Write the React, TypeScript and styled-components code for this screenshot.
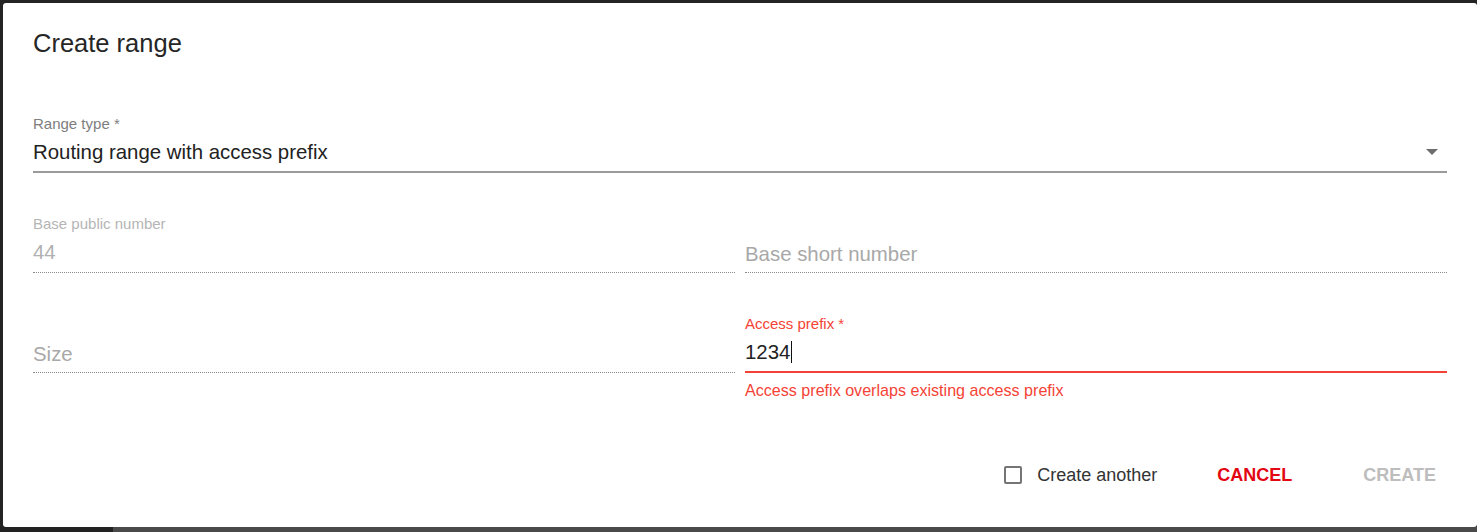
import styled, { createGlobalStyle } from "styled-components";

const GlobalStyle = createGlobalStyle`
  html, body {
    margin: 0;
    padding: 0;
  }
  body {
    font-family: "Liberation Sans", Arial, sans-serif;
    background: #232323;
  }
`;

const Backdrop = styled.div`
  height: 532px;
  padding: 3px 0 0 3px;
  box-sizing: border-box;
  background: linear-gradient(to right, #222222 113px, #4a4a4a 113px) left bottom / 100% 5px no-repeat,
    #242424;
  overflow: hidden;
`;

const Dialog = styled.div`
  width: 1474px;
  height: 524px;
  box-sizing: border-box;
  background: #ffffff;
  border-radius: 3px;
  padding: 24px 30px 0 30px;
  display: flex;
  flex-direction: column;
`;

const Title = styled.h3`
  margin: 0;
  font-size: 25.5px;
  line-height: 32px;
  font-weight: 400;
  color: #262626;
`;

const Form = styled.div`
  margin-top: 56px;
  display: grid;
  grid-template-columns: 1fr 1fr;
  column-gap: 10px;
  row-gap: 42px;
`;

const FullRow = styled.div`
  grid-column: 1 / span 2;
`;

const Field = styled.div`
  display: flex;
  flex-direction: column;
`;

const Label = styled.div<{ $tone: "normal" | "disabled" | "error" }>`
  height: 18px;
  font-size: 15px;
  line-height: 18px;
  color: ${(p) =>
    p.$tone === "error" ? "#f44336" : p.$tone === "disabled" ? "#b5b5b5" : "#7e7e7e"};
  white-space: nowrap;
`;

const InputRow = styled.div`
  margin-top: 7px;
  height: 24px;
  display: flex;
  align-items: center;
`;

const Value = styled.span<{ $tone: "normal" | "disabled" | "placeholder" }>`
  flex: 1;
  font-size: 20.4px;
  line-height: 24px;
  color: ${(p) =>
    p.$tone === "disabled" ? "#b0b0b0" : p.$tone === "placeholder" ? "#a8a8a8" : "#222222"};
  white-space: nowrap;
  ${(p) => (p.$tone === "placeholder" ? "transform: translateY(2px);" : "")}
`;

const Caret = styled.span`
  display: inline-block;
  width: 1px;
  height: 22px;
  margin-left: 1px;
  background: #111111;
  vertical-align: -4px;
`;

const Arrow = styled.span`
  width: 0;
  height: 0;
  margin-right: 9px;
  border-left: 6px solid transparent;
  border-right: 6px solid transparent;
  border-top: 6px solid #6e6e6e;
`;

const Underline = styled.div<{ $kind: "solid" | "dotted" | "error" }>`
  margin-top: 7px;
  height: 2px;
  box-sizing: border-box;
  ${(p) =>
    p.$kind === "dotted"
      ? "border-bottom: 1px dotted #8a8a8a;"
      : `background: ${p.$kind === "error" ? "#f44336" : "#9a9a9a"};`}
`;

const Helper = styled.div`
  margin-top: 8px;
  font-size: 16.1px;
  line-height: 18px;
  color: #f44336;
  white-space: nowrap;
`;

const Footer = styled.div`
  margin-top: auto;
  margin-bottom: 34px;
  height: 36px;
  display: flex;
  align-items: center;
  justify-content: flex-end;
  margin-right: -9px;
`;

const CheckLabel = styled.label`
  display: flex;
  align-items: center;
  gap: 15px;
  font-size: 18px;
  color: #333333;
  cursor: pointer;
`;

const Box = styled.span`
  width: 18px;
  height: 18px;
  box-sizing: border-box;
  border: 2px solid #757575;
  border-radius: 2px;
`;

const Button = styled.button<{ $primary?: boolean; $gap: number }>`
  margin-left: ${(p) => p.$gap}px;
  padding: 0 20px;
  height: 36px;
  border: none;
  background: transparent;
  font-family: inherit;
  font-size: 18px;
  font-weight: 700;
  color: ${(p) => (p.$primary ? "#e30613" : "#bdbdbd")};
  cursor: ${(p) => (p.$primary ? "pointer" : "default")};
`;

export default function App() {
  return (
    <>
      <GlobalStyle />
      <Backdrop>
        <Dialog>
          <Title>Create range</Title>
          <Form>
            <FullRow>
              <Field>
                <Label $tone="normal">Range type *</Label>
                <InputRow>
                  <Value $tone="normal">Routing range with access prefix</Value>
                  <Arrow />
                </InputRow>
                <Underline $kind="solid" />
              </Field>
            </FullRow>
            <Field>
              <Label $tone="disabled">Base public number</Label>
              <InputRow>
                <Value $tone="disabled">44</Value>
              </InputRow>
              <Underline $kind="dotted" />
            </Field>
            <Field>
              <Label $tone="normal" />
              <InputRow>
                <Value $tone="placeholder">Base short number</Value>
              </InputRow>
              <Underline $kind="dotted" />
            </Field>
            <Field>
              <Label $tone="normal" />
              <InputRow>
                <Value $tone="placeholder">Size</Value>
              </InputRow>
              <Underline $kind="dotted" />
            </Field>
            <Field>
              <Label $tone="error">Access prefix *</Label>
              <InputRow>
                <Value $tone="normal">
                  1234
                  <Caret />
                </Value>
              </InputRow>
              <Underline $kind="error" />
              <Helper>Access prefix overlaps existing access prefix</Helper>
            </Field>
          </Form>
          <Footer>
            <CheckLabel>
              <Box />
              Create another
            </CheckLabel>
            <Button $primary $gap={40}>
              CANCEL
            </Button>
            <Button $gap={31}>CREATE</Button>
          </Footer>
        </Dialog>
      </Backdrop>
    </>
  );
}
